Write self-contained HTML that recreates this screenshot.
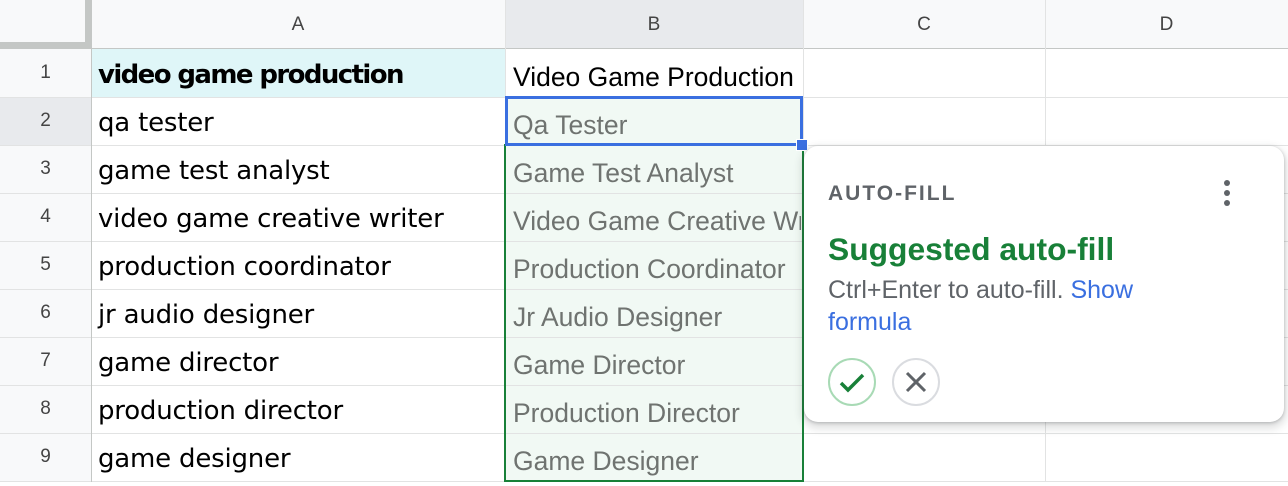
<!DOCTYPE html>
<html><head><style>
body{margin:0;width:1288px;height:482px;overflow:hidden;background:#fff;font-family:"Liberation Sans",sans-serif;position:relative}
.a{position:absolute;box-sizing:border-box}
.hl{position:absolute;height:1px;background:#e2e3e3;left:0;width:1288px}
.vl{position:absolute;width:1px;background:#e2e3e3;top:0;height:482px}
.rn{position:absolute;left:0;width:91px;text-align:center;font-size:19px;color:#444;height:48px;line-height:48px}
.ca{position:absolute;left:98px;font-size:26px;color:#000;height:48px;line-height:53px;font-family:"DejaVu Sans","Liberation Sans",sans-serif;letter-spacing:-0.2px;white-space:nowrap}
.cb{position:absolute;left:513px;font-size:26.5px;color:#6f7370;height:48px;line-height:57px;white-space:nowrap;width:288px;overflow:hidden}
</style></head><body>
<div class="a" style="left:0;top:0;width:91px;height:482px;background:#f8f9fa"></div>
<div class="a" style="left:0;top:0;width:1288px;height:48px;background:#f8f9fa"></div>
<div class="a" style="left:505px;top:0;width:298px;height:48px;background:#e8eaed"></div>
<div class="a" style="left:0;top:97px;width:91px;height:48px;background:#e8eaed"></div>
<div class="a" style="left:91px;top:49px;width:414px;height:48px;background:#dff6f8"></div>
<div class="a" style="left:505px;top:145px;width:298px;height:337px;background:#f1f9f4"></div>
<div class="a" style="left:505px;top:97px;width:298px;height:48px;background:#f1f9f4"></div>
<div class="hl" style="top:48px;background:#c4c7c5;height:1px"></div>
<div class="hl" style="top:97px"></div><div class="hl" style="top:145px"></div><div class="hl" style="top:193px"></div><div class="hl" style="top:241px"></div><div class="hl" style="top:289px"></div><div class="hl" style="top:337px"></div><div class="hl" style="top:385px"></div><div class="hl" style="top:433px"></div><div class="hl" style="top:481px"></div>
<div class="vl" style="left:91px;background:#c4c7c5"></div><div class="vl" style="left:505px"></div><div class="vl" style="left:803px"></div><div class="vl" style="left:1045px"></div>
<div class="a" style="left:0;top:0;width:91px;height:48px;background:#f8f9fa;border-right:6px solid #c4c7c5;border-bottom:7px solid #c4c7c5;width:91px;height:49px"></div>
<div class="a" style="left:91px;top:0;width:414px;height:48px;line-height:50px;text-align:center;font-size:19px;color:#444">A</div>
<div class="a" style="left:505px;top:0;width:298px;height:48px;line-height:50px;text-align:center;font-size:19px;color:#444">B</div>
<div class="a" style="left:803px;top:0;width:242px;height:48px;line-height:50px;text-align:center;font-size:19px;color:#444">C</div>
<div class="a" style="left:1045px;top:0;width:243px;height:48px;line-height:50px;text-align:center;font-size:19px;color:#444">D</div>
<div class="rn" style="top:49px">1</div><div class="rn" style="top:97px">2</div><div class="rn" style="top:145px">3</div><div class="rn" style="top:193px">4</div><div class="rn" style="top:241px">5</div><div class="rn" style="top:289px">6</div><div class="rn" style="top:337px">7</div><div class="rn" style="top:385px">8</div><div class="rn" style="top:433px">9</div>
<div class="ca" style="top:49px;font-weight:bold;letter-spacing:-1.6px">video game production</div>
<div class="ca" style="top:97px">qa tester</div>
<div class="ca" style="top:145px">game test analyst</div>
<div class="ca" style="top:193px">video game creative writer</div>
<div class="ca" style="top:241px">production coordinator</div>
<div class="ca" style="top:289px">jr audio designer</div>
<div class="ca" style="top:337px">game director</div>
<div class="ca" style="top:385px">production director</div>
<div class="ca" style="top:433px">game designer</div>
<div class="cb" style="top:49px;color:#000">Video Game Production</div>
<div class="cb" style="top:97px">Qa Tester</div>
<div class="cb" style="top:145px">Game Test Analyst</div>
<div class="cb" style="top:193px">Video Game Creative Writer</div>
<div class="cb" style="top:241px">Production Coordinator</div>
<div class="cb" style="top:289px">Jr Audio Designer</div>
<div class="cb" style="top:337px">Game Director</div>
<div class="cb" style="top:385px">Production Director</div>
<div class="cb" style="top:433px">Game Designer</div>
<div class="a" style="left:504px;top:144px;width:300px;height:338px;border:2px solid #188038;border-top:none"></div>
<div class="a" style="left:505px;top:96px;width:298px;height:50px;border:3px solid #3a6fe0"></div>
<div class="a" style="left:796px;top:139px;width:12px;height:12px;background:#3a6fe0;border:1px solid #fff"></div>
<div class="a" style="left:804px;top:146px;width:480px;height:276px;background:#fff;border-radius:14px;box-shadow:0 1px 3px rgba(60,64,67,.3),0 4px 8px 3px rgba(60,64,67,.15)">
<div class="a" style="left:24px;top:36px;font-size:21px;font-weight:bold;letter-spacing:2px;color:#5f6368;white-space:nowrap">AUTO-FILL</div>
<div class="a" style="left:420px;top:34px;width:6px"><div style="width:6px;height:6px;border-radius:3px;background:#5f6368;margin-bottom:4px"></div><div style="width:6px;height:6px;border-radius:3px;background:#5f6368;margin-bottom:4px"></div><div style="width:6px;height:6px;border-radius:3px;background:#5f6368"></div></div>
<div class="a" style="left:24px;top:85px;font-size:31.8px;font-weight:bold;color:#188038;white-space:nowrap">Suggested auto-fill</div>
<div class="a" style="left:24px;top:128px;width:340px;font-size:25px;line-height:32px;color:#5f6368">Ctrl+Enter to auto-fill. <span style="color:#3a6fe0">Show formula</span></div>
<div class="a" style="left:24px;top:212px;width:48px;height:48px;border-radius:50%;border:2px solid #a8dab5"><svg width="44" height="44" viewBox="0 0 44 44" style="position:absolute;left:0;top:0"><path d="M11 23l7 7 15-15" fill="none" stroke="#188038" stroke-width="3.5"/></svg></div>
<div class="a" style="left:88px;top:212px;width:48px;height:48px;border-radius:50%;border:2px solid #dadce0"><svg width="44" height="44" viewBox="0 0 44 44" style="position:absolute;left:0;top:0"><path d="M13 13l18 18M31 13L13 31" fill="none" stroke="#5f6368" stroke-width="3"/></svg></div>
</div>
</body></html>
